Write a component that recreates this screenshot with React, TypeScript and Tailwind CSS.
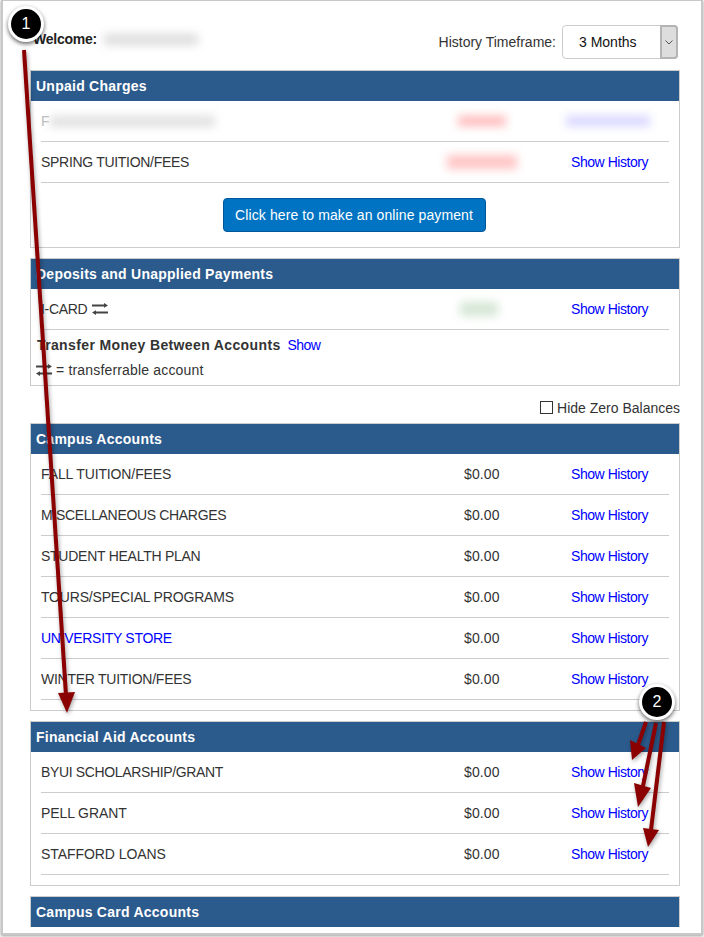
import React from "react";

const font = { fontFamily: '"Liberation Sans", Arial, sans-serif' };

function Swap({ className = "" }: { className?: string }) {
  return (
    <svg viewBox="0 0 16 12" className={`inline-block w-4 h-3 ${className}`} fill="#444">
      <path d="M0 1.6h12V0l4 2.4-4 2.4V3.4H0z" />
      <path d="M16 8.6H4V7.2L0 9.6 4 12v-1.6h12z" />
    </svg>
  );
}

function Blur({ w, h, color, className = "" }: { w: number; h: number; color: string; className?: string }) {
  return <div className={`blur-[5px] ${className}`} style={{ width: w, height: h, background: color }} />;
}

function Header({ children }: { children: React.ReactNode }) {
  return (
    <div className="h-[30px] bg-[#2b5a8c] px-[5px] flex items-center text-white font-bold text-[14px] tracking-[0.25px]">
      {children}
    </div>
  );
}

function Row({
  name,
  amount,
  link = true,
  nameClass = "",
}: {
  name: React.ReactNode;
  amount: React.ReactNode;
  link?: React.ReactNode | boolean;
  nameClass?: string;
}) {
  return (
    <div className="h-[41px] mx-[10px] border-b border-[#ccc] flex items-center text-[14px] text-[#333]">
      <div className={`w-[423px] shrink-0 flex items-center ${nameClass}`}>{name}</div>
      <div className="w-[107px] shrink-0 flex items-center tracking-[0.1px]">{amount}</div>
      <div className="text-[#0000ff] flex items-center tracking-[-0.45px]">
        {link === true ? "Show History" : link}
      </div>
    </div>
  );
}

function Panel({ children, className = "" }: { children: React.ReactNode; className?: string }) {
  return <div className={`border border-[#ccc] ${className}`}>{children}</div>;
}

function Callout({ n, className }: { n: number; className: string }) {
  return (
    <div
      className={`absolute w-[36px] h-[36px] rounded-full bg-black border-[3px] border-white shadow-[0_2px_4px_rgba(0,0,0,0.6)] flex items-center justify-center text-white text-[16px] ${className}`}
    >
      {n}
    </div>
  );
}

export default function App() {
  return (
    <div className="relative w-[704px] h-[937px] bg-white overflow-hidden text-[#333]" style={font}>
      <div className="absolute left-[1px] top-0 w-[702px] h-[935px] border-t border-l-2 border-r-2 border-b-2 border-[#c8c8c8] shadow-[0_1px_3px_rgba(0,0,0,0.4)] pointer-events-none" />

      <div className="w-[650px] ml-[30px] pt-[25px]">
        <div className="h-[45px] flex items-start justify-between">
          <div className="flex items-center h-[28px] text-[14px] font-bold text-[#222] tracking-[-0.25px]">
            <span className="ml-[3px]">Welcome:</span>
            <Blur w={94} h={11} color="#dcdcdc" className="ml-[7px]" />
          </div>
          <div className="flex items-center text-[14px] mr-[2px]">
            <span className="mr-[6px]">History Timeframe:</span>
            <div className="w-[116px] h-[34px] border border-[#ccc] rounded-[4px] flex items-stretch">
              <span className="flex-1 flex items-center pl-[16px] text-[#111]">3 Months</span>
              <span className="w-[18px] -my-px -mr-px bg-[#ddd] border-2 border-[#b4b4b4] rounded-r-[4px] flex items-center justify-center">
                <svg viewBox="0 0 8 5" className="w-[8px] h-[5px]" fill="none" stroke="#555" strokeWidth="1">
                  <path d="M0.5 0.5 4 4 7.5 0.5" />
                </svg>
              </span>
            </div>
          </div>
        </div>

        <Panel className="h-[178px]">
          <Header>Unpaid Charges</Header>
          <Row
            name={
              <>
                <span className="text-[#bbb]">F</span>
                <Blur w={165} h={11} color="#e0e0e0" />
              </>
            }
            amount={<Blur w={48} h={10} color="#ffb8b8" className="-ml-[6px]" />}
            link={<Blur w={84} h={10} color="#d4d4ff" className="-ml-[5px]" />}
          />
          <Row
            name="SPRING TUITION/FEES"
            nameClass="tracking-[-0.3px]"
            amount={<Blur w={70} h={14} color="#ffc4c4" className="-ml-[17px]" />}
          />
          <div className="flex justify-center pt-[15px] pr-[2px]">
            <div className="w-[263px] h-[34px] bg-[#0074c2] border border-[#00569a] rounded-[4px] text-white text-[14px] tracking-[0.1px] flex items-center justify-center">
              Click here to make an online payment
            </div>
          </div>
        </Panel>

        <Panel className="h-[128px] mt-[10px]">
          <Header>Deposits and Unapplied Payments</Header>
          <Row
            name={
              <>
                <span className="tracking-[-0.3px]">I-CARD</span>
                <Swap className="ml-[5px]" />
              </>
            }
            amount={<Blur w={38} h={14} color="#d4e6d4" className="-ml-[4px]" />}
          />
          <div className="pl-[6px] pt-[5px] text-[14px]">
            <div className="flex items-center h-[20px]">
              <span className="font-bold tracking-[0.37px]">Transfer Money Between Accounts</span>
              <span className="ml-[7px] text-[#0000ff] tracking-[-0.6px]">Show</span>
            </div>
            <div className="flex items-center h-[20px] mt-[5px] -ml-[1px]">
              <Swap />
              <span className="ml-[4px] tracking-[0.17px]">= transferrable account</span>
            </div>
          </div>
        </Panel>

        <div className="h-[37px] flex items-center justify-end text-[14px] pt-[7px]">
          <span className="w-[13px] h-[13px] border border-[#333] mr-[4px] -mt-[2px]" />
          Hide Zero Balances
        </div>

        <Panel className="h-[288px]">
          <Header>Campus Accounts</Header>
          <Row name="FALL TUITION/FEES" nameClass="tracking-[-0.12px]" amount="$0.00" />
          <Row name="MISCELLANEOUS CHARGES" nameClass="tracking-[-0.33px]" amount="$0.00" />
          <Row name="STUDENT HEALTH PLAN" nameClass="tracking-[-0.26px]" amount="$0.00" />
          <Row name="TOURS/SPECIAL PROGRAMS" nameClass="tracking-[-0.18px]" amount="$0.00" />
          <Row name="UNIVERSITY STORE" nameClass="tracking-[-0.3px] text-[#0000ff]" amount="$0.00" />
          <Row name="WINTER TUITION/FEES" nameClass="tracking-[-0.26px]" amount="$0.00" />
        </Panel>

        <Panel className="h-[165px] mt-[10px]">
          <Header>Financial Aid Accounts</Header>
          <Row name="BYUI SCHOLARSHIP/GRANT" nameClass="tracking-[-0.36px]" amount="$0.00" />
          <Row name="PELL GRANT" nameClass="tracking-[-0.1px]" amount="$0.00" />
          <Row name="STAFFORD LOANS" nameClass="tracking-[-0.07px]" amount="$0.00" />
        </Panel>

        <div className="border border-[#ccc] border-b-0 mt-[10px] h-[31px]">
          <Header>Campus Card Accounts</Header>
        </div>
      </div>

      <svg
        className="absolute inset-0 pointer-events-none drop-shadow-[1px_2px_2px_rgba(0,0,0,0.35)]"
        width="704"
        height="937"
        viewBox="0 0 704 937"
        fill="#8b0000"
        stroke="none"
      >
        <path d="M24 50 L66 695" stroke="#8b0000" strokeWidth="4" />
        <path d="M58 693 L75 692 L67 713 Z" />
        <path d="M646 722 L638 745" stroke="#8b0000" strokeWidth="4" />
        <path d="M630 740 L646 748 L632 760 Z" />
        <path d="M656 723 L643 786" stroke="#8b0000" strokeWidth="4" />
        <path d="M634 783 L651 788 L638 807 Z" />
        <path d="M664 722 L651 830" stroke="#8b0000" strokeWidth="4" />
        <path d="M643 828 L659 830 L648 847 Z" />
      </svg>

      <Callout n={1} className="left-[8px] top-[6px]" />
      <Callout n={2} className="left-[639px] top-[684px]" />
    </div>
  );
}
